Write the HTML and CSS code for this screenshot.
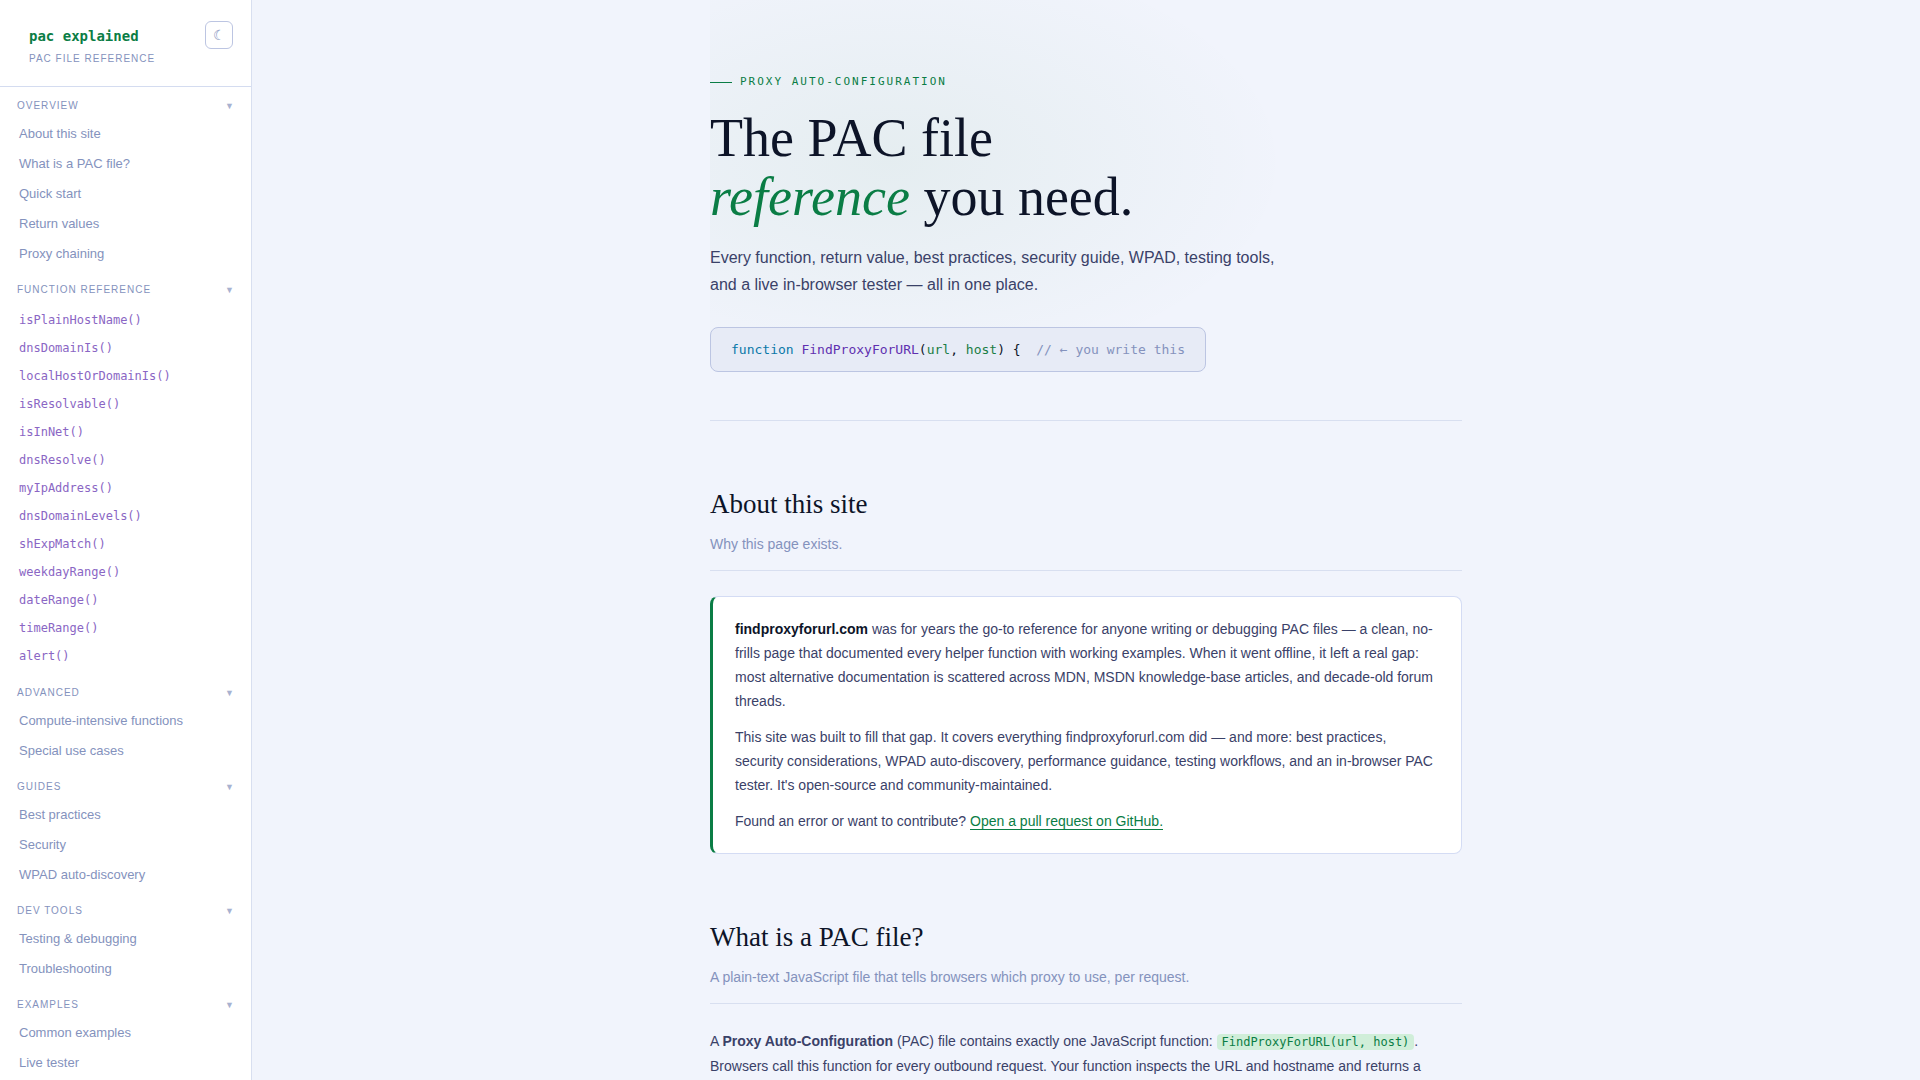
FILE: index.html
```html
<!DOCTYPE html>
<html lang="en">
<head>
    <meta charset="UTF-8">
    <meta name="viewport" content="width=device-width, initial-scale=1.0">
    <title>pac explained - PAC file reference</title>
    <link rel="stylesheet" href="styles.css">
</head>
<body>
    <aside class="sidebar">
        <div class="sidebar-header">
            <div class="brand">
                <a href="#hero" class="brand-name">pac explained</a>
                <span class="brand-tag">PAC file reference</span>
            </div>
            <button class="theme-toggle" id="theme-toggle" aria-label="Toggle theme">☾</button>
        </div>
        <nav class="nav">
            <button class="nav-heading">Overview <span class="arrow">▼</span></button>
            <ul class="nav-list">
                <li><a href="#about">About this site</a></li>
                <li><a href="#what-is-pac">What is a PAC file?</a></li>
                <li><a href="#quick-start">Quick start</a></li>
                <li><a href="#return-values">Return values</a></li>
                <li><a href="#proxy-chaining">Proxy chaining</a></li>
            </ul>
            <button class="nav-heading">Function reference <span class="arrow">▼</span></button>
            <ul class="nav-list nav-functions">
                <li><a href="#isPlainHostName">isPlainHostName()</a></li>
                <li><a href="#dnsDomainIs">dnsDomainIs()</a></li>
                <li><a href="#localHostOrDomainIs">localHostOrDomainIs()</a></li>
                <li><a href="#isResolvable">isResolvable()</a></li>
                <li><a href="#isInNet">isInNet()</a></li>
                <li><a href="#dnsResolve">dnsResolve()</a></li>
                <li><a href="#myIpAddress">myIpAddress()</a></li>
                <li><a href="#dnsDomainLevels">dnsDomainLevels()</a></li>
                <li><a href="#shExpMatch">shExpMatch()</a></li>
                <li><a href="#weekdayRange">weekdayRange()</a></li>
                <li><a href="#dateRange">dateRange()</a></li>
                <li><a href="#timeRange">timeRange()</a></li>
                <li><a href="#alert">alert()</a></li>
            </ul>
            <button class="nav-heading">Advanced <span class="arrow">▼</span></button>
            <ul class="nav-list">
                <li><a href="#compute">Compute-intensive functions</a></li>
                <li><a href="#special">Special use cases</a></li>
            </ul>
            <button class="nav-heading">Guides <span class="arrow">▼</span></button>
            <ul class="nav-list">
                <li><a href="#best-practices">Best practices</a></li>
                <li><a href="#security">Security</a></li>
                <li><a href="#wpad">WPAD auto-discovery</a></li>
            </ul>
            <button class="nav-heading">Dev tools <span class="arrow">▼</span></button>
            <ul class="nav-list">
                <li><a href="#testing">Testing &amp; debugging</a></li>
                <li><a href="#troubleshooting">Troubleshooting</a></li>
            </ul>
            <button class="nav-heading">Examples <span class="arrow">▼</span></button>
            <ul class="nav-list">
                <li><a href="#examples">Common examples</a></li>
                <li><a href="#tester">Live tester</a></li>
            </ul>
        </nav>
    </aside>

    <main class="main">
        <div class="content">
            <header class="hero" id="hero">
                <div class="eyebrow">Proxy Auto-Configuration</div>
                <h1>The PAC file<br><em>reference</em> you need.</h1>
                <p class="hero-text">Every function, return value, best practices, security guide, WPAD, testing tools, and a live in-browser tester — all in one place.</p>
                <pre class="hero-code"><span class="kw">function</span> <span class="fn">FindProxyForURL</span>(<span class="arg">url</span>, <span class="arg">host</span>) {  <span class="comment">// ← you write this</span></pre>
            </header>

            <section class="section" id="about">
                <h2>About this site</h2>
                <p class="section-desc">Why this page exists.</p>
                <div class="about-card">
                    <p><strong>findproxyforurl.com</strong> was for years the go-to reference for anyone writing or debugging PAC files — a clean, no-frills page that documented every helper function with working examples. When it went offline, it left a real gap: most alternative documentation is scattered across MDN, MSDN knowledge-base articles, and decade-old forum threads.</p>
                    <p>This site was built to fill that gap. It covers everything findproxyforurl.com did — and more: best practices, security considerations, WPAD auto-discovery, performance guidance, testing workflows, and an in-browser PAC tester. It's open-source and community-maintained.</p>
                    <p>Found an error or want to contribute? <a href="#github">Open a pull request on GitHub.</a></p>
                </div>
            </section>

            <section class="section" id="what-is-pac">
                <h2>What is a PAC file?</h2>
                <p class="section-desc">A plain-text JavaScript file that tells browsers which proxy to use, per request.</p>
                <p>A <strong>Proxy Auto-Configuration</strong> (PAC) file contains exactly one JavaScript function: <code>FindProxyForURL(url, host)</code>. Browsers call this function for every outbound request. Your function inspects the URL and hostname and returns a</p>
            </section>
        </div>
    </main>
</body>
</html>
```

FILE: styles.css
```css
* {
    margin: 0;
    padding: 0;
    box-sizing: border-box;
}
body {
    display: flex;
    height: 100vh;
    overflow: hidden;
    background: #f1f4fc;
    color: #3a4168;
    font-family: 'Liberation Sans', Arial, sans-serif;
    font-size: 14px;
    line-height: 24px;
}
button {
    border: none;
    background: none;
    font-family: inherit;
    cursor: pointer;
}
a {
    text-decoration: none;
}

/* Sidebar */
.sidebar {
    width: 252px;
    flex-shrink: 0;
    background: #fff;
    border-right: 1px solid #d8dff0;
    overflow: hidden;
}
.sidebar-header {
    display: flex;
    justify-content: space-between;
    align-items: flex-start;
    padding: 21px 18px 13px 29px;
    border-bottom: 1px solid #d4dcf0;
}
.brand {
    display: flex;
    flex-direction: column;
    padding: 3px 0;
}
.brand-name {
    color: #0a7d45;
    font-family: 'DejaVu Sans Mono', monospace;
    font-size: 14px;
    font-weight: bold;
}
.brand-tag {
    color: #8492bd;
    font-size: 10px;
    line-height: 22px;
    letter-spacing: 1px;
    text-transform: uppercase;
}
.theme-toggle {
    width: 28px;
    height: 28px;
    border: 1px solid #bcc5e2;
    border-radius: 6px;
    color: #8492bd;
    font-size: 14px;
}
.nav-heading {
    display: flex;
    justify-content: space-between;
    align-items: center;
    width: 100%;
    padding: 10px 17px 4px 17px;
    color: #8492bd;
    font-size: 10px;
    line-height: 18px;
    letter-spacing: 1px;
    text-transform: uppercase;
}
.arrow {
    font-size: 9px;
    letter-spacing: 0;
    opacity: 0.7;
}
.nav-list {
    margin-bottom: 2px;
    list-style: none;
}
.nav-list a {
    display: block;
    padding: 4px 19px;
    color: #8492bd;
    font-size: 13px;
    line-height: 22px;
}
.nav-functions {
    padding: 3px 0 2px;
}
.nav-functions a {
    color: #8a66c4;
    font-family: 'DejaVu Sans Mono', monospace;
    font-size: 12px;
    line-height: 20px;
}

/* Content */
.main {
    flex: 1;
    overflow: hidden;
}
.content {
    max-width: 752px;
    margin: 0 auto;
}
.hero {
    padding: 71px 0 48px;
    border-bottom: 1px solid #d8dff0;
    background: radial-gradient(ellipse 400px 220px at 180px 162px, rgba(20, 120, 40, 0.055), transparent);
}
.eyebrow {
    display: flex;
    align-items: center;
    gap: 8px;
    color: #0a7d45;
    font-family: 'DejaVu Sans Mono', monospace;
    font-size: 11px;
    line-height: 22px;
    letter-spacing: 2px;
    text-transform: uppercase;
}
.eyebrow::before {
    content: '';
    width: 22px;
    height: 1px;
    background: #0a7d45;
}
h1, h2 {
    color: #0d1428;
    font-family: 'Liberation Serif', 'Times New Roman', serif;
    font-weight: normal;
}
h1 {
    margin: 16px 0 17px;
    font-size: 54px;
    line-height: 59px;
}
h1 em {
    color: #0a7d45;
}
.hero-text {
    max-width: 570px;
    margin-bottom: 29px;
    font-size: 16px;
    line-height: 27px;
}
.hero-code {
    width: fit-content;
    padding: 10px 20px;
    border: 1px solid #bcc5e2;
    border-radius: 8px;
    background: #e7ebf6;
    color: #0d1428;
    font-family: 'DejaVu Sans Mono', monospace;
    font-size: 13px;
    line-height: 23px;
}
.kw {
    color: #0a78a8;
}
.fn {
    color: #6030b0;
}
.arg {
    color: #1a7d45;
}
.comment {
    color: #8492bd;
}
.section {
    padding-top: 63px;
}
h2 {
    font-size: 27px;
    line-height: 40px;
}
.section-desc {
    margin-bottom: 25px;
    padding: 8px 0 14px;
    border-bottom: 1px solid #d8dff0;
    color: #8492bd;
}
.about-card {
    padding: 20px 24px 20px 22px;
    border: 1px solid #d4dcf4;
    border-left: 3px solid #0a7d45;
    border-radius: 8px;
    background: #fff;
}
.about-card p + p {
    margin-top: 12px;
}
.about-card strong {
    color: #0d1428;
}
.about-card a {
    border-bottom: 1px solid #0a7d45;
    color: #0a7d45;
}
code {
    padding: 1px 5px;
    border-radius: 4px;
    background: #d0eed9;
    color: #0a7d45;
    font-family: 'DejaVu Sans Mono', monospace;
    font-size: 12px;
}
```
